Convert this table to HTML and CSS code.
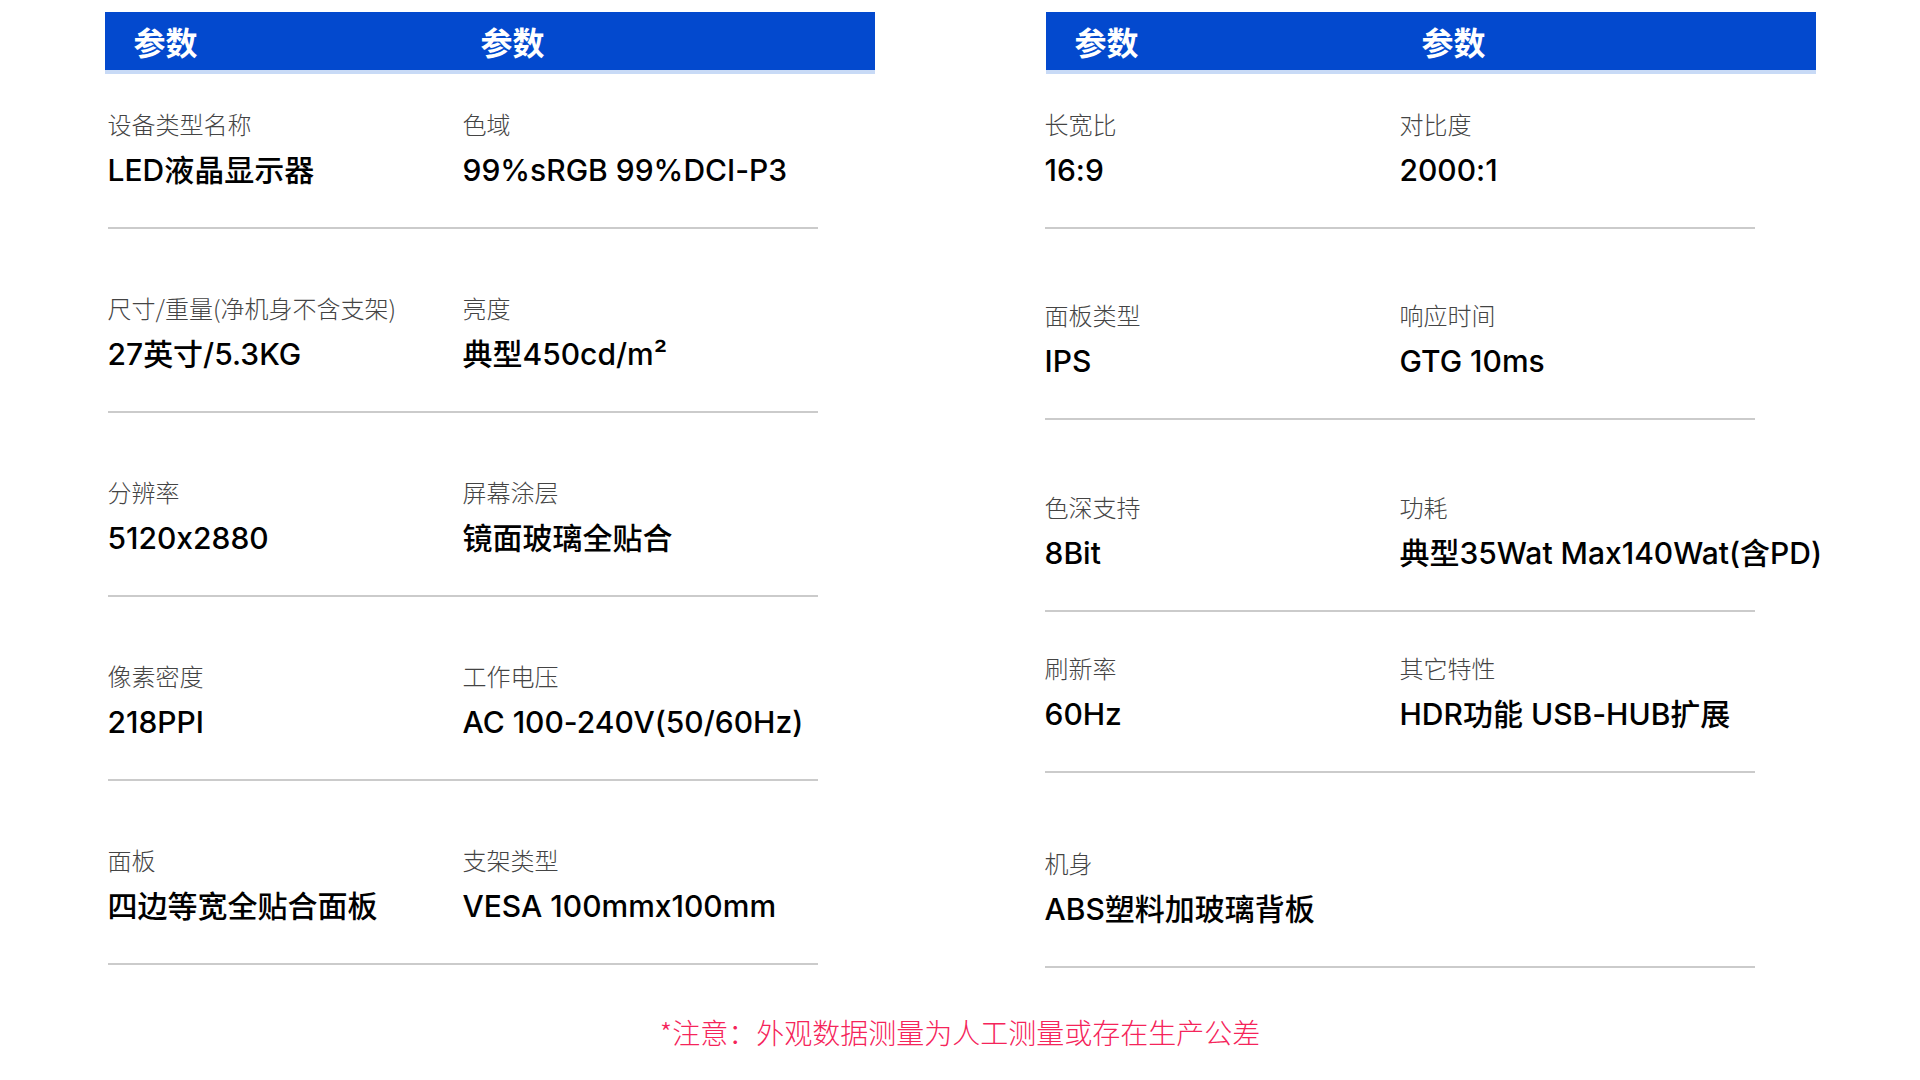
FILE: index.html
```html
<!DOCTYPE html>
<html lang="zh-CN">
<head>
<meta charset="utf-8">
<title>参数</title>
<link rel="stylesheet" href="styles.css">
</head>
<body>
<main class="page">
  <div class="panels">
    <section class="panel">
      <div class="panel-head">
        <span>参数</span>
        <span>参数</span>
      </div>
      <div class="rows rows--left">
        <div class="spec-row spec-row--first">
          <div class="cell"><div class="label">设备类型名称</div><div class="value">LED液晶显示器</div></div>
          <div class="cell"><div class="label">色域</div><div class="value">99%sRGB 99%DCI-P3</div></div>
        </div>
        <div class="spec-row">
          <div class="cell"><div class="label">尺寸/重量(净机身不含支架)</div><div class="value">27英寸/5.3KG</div></div>
          <div class="cell"><div class="label">亮度</div><div class="value">典型450cd/m²</div></div>
        </div>
        <div class="spec-row">
          <div class="cell"><div class="label">分辨率</div><div class="value">5120x2880</div></div>
          <div class="cell"><div class="label">屏幕涂层</div><div class="value">镜面玻璃全贴合</div></div>
        </div>
        <div class="spec-row">
          <div class="cell"><div class="label">像素密度</div><div class="value">218PPI</div></div>
          <div class="cell"><div class="label">工作电压</div><div class="value">AC 100-240V(50/60Hz)</div></div>
        </div>
        <div class="spec-row">
          <div class="cell"><div class="label">面板</div><div class="value">四边等宽全贴合面板</div></div>
          <div class="cell"><div class="label">支架类型</div><div class="value">VESA 100mmx100mm</div></div>
        </div>
      </div>
    </section>

    <section class="panel">
      <div class="panel-head">
        <span>参数</span>
        <span>参数</span>
      </div>
      <div class="rows rows--right">
        <div class="spec-row spec-row--first">
          <div class="cell"><div class="label">长宽比</div><div class="value">16:9</div></div>
          <div class="cell"><div class="label">对比度</div><div class="value">2000:1</div></div>
        </div>
        <div class="spec-row spec-row--loose">
          <div class="cell"><div class="label">面板类型</div><div class="value">IPS</div></div>
          <div class="cell"><div class="label">响应时间</div><div class="value">GTG 10ms</div></div>
        </div>
        <div class="spec-row spec-row--looser">
          <div class="cell"><div class="label">色深支持</div><div class="value">8Bit</div></div>
          <div class="cell"><div class="label">功耗</div><div class="value">典型35Wat Max140Wat(含PD)</div></div>
        </div>
        <div class="spec-row spec-row--tight">
          <div class="cell"><div class="label">刷新率</div><div class="value">60Hz</div></div>
          <div class="cell"><div class="label">其它特性</div><div class="value">HDR功能 USB-HUB扩展</div></div>
        </div>
        <div class="spec-row spec-row--wide">
          <div class="cell"><div class="label">机身</div><div class="value">ABS塑料加玻璃背板</div></div>
          <div class="cell"></div>
        </div>
      </div>
    </section>
  </div>

  <p class="note">*注意：外观数据测量为人工测量或存在生产公差</p>
</main>
</body>
</html>
```

FILE: styles.css
```css
* {
  box-sizing: border-box;
}

html, body {
  margin: 0;
  padding: 0;
  background: #ffffff;
}

body {
  font-family: "Liberation Sans", "Noto Sans CJK SC", sans-serif;
  color: #000;
}

.page {
  width: 1920px;
  padding-top: 12px;
}

.panels {
  display: flex;
  justify-content: center;
  align-items: flex-start;
  gap: 171px;
}

.panel {
  width: 770px;
}

.panel-head {
  display: grid;
  grid-template-columns: 347px 1fr;
  align-items: center;
  height: 62px;
  padding-left: 29px;
  background: #0349ce;
  border-bottom: 4px solid #c8daf6;
  color: #fff;
  font-family: "Noto Sans CJK SC", sans-serif;
  font-weight: 700;
  font-size: 32px;
  line-height: 58px;
}

.rows {
  width: 710px;
}

.rows--left {
  margin-left: 3px;
}

.rows--right {
  margin-left: -1px;
}

.spec-row {
  display: grid;
  grid-template-columns: 355px 1fr;
  padding-top: 64px;
  padding-bottom: 37px;
  border-bottom: 2px solid #cbcbcb;
}

.spec-row--first {
  padding-top: 35px;
}

.spec-row--loose {
  padding-top: 71px;
}

.spec-row--looser {
  padding-top: 72px;
}

.spec-row--tight {
  padding-top: 41px;
}

.spec-row--wide {
  padding-top: 75px;
}

.cell {
  display: flex;
  flex-direction: column;
  gap: 11px;
}

.label {
  font-family: "Noto Sans CJK SC", sans-serif;
  font-weight: 300;
  font-size: 24px;
  line-height: 30px;
  color: #444;
  white-space: nowrap;
}

.value {
  font-family: Inter, "Noto Sans CJK SC", sans-serif;
  font-feature-settings: "calt" 0;
  font-weight: 500;
  font-size: 30px;
  line-height: 40px;
  color: #000;
  white-space: nowrap;
}

.note {
  margin: 44px 0 0;
  text-align: center;
  font-family: "Noto Sans CJK SC", sans-serif;
  font-weight: 300;
  font-size: 28px;
  line-height: 40px;
  color: #f5245a;
}
```
